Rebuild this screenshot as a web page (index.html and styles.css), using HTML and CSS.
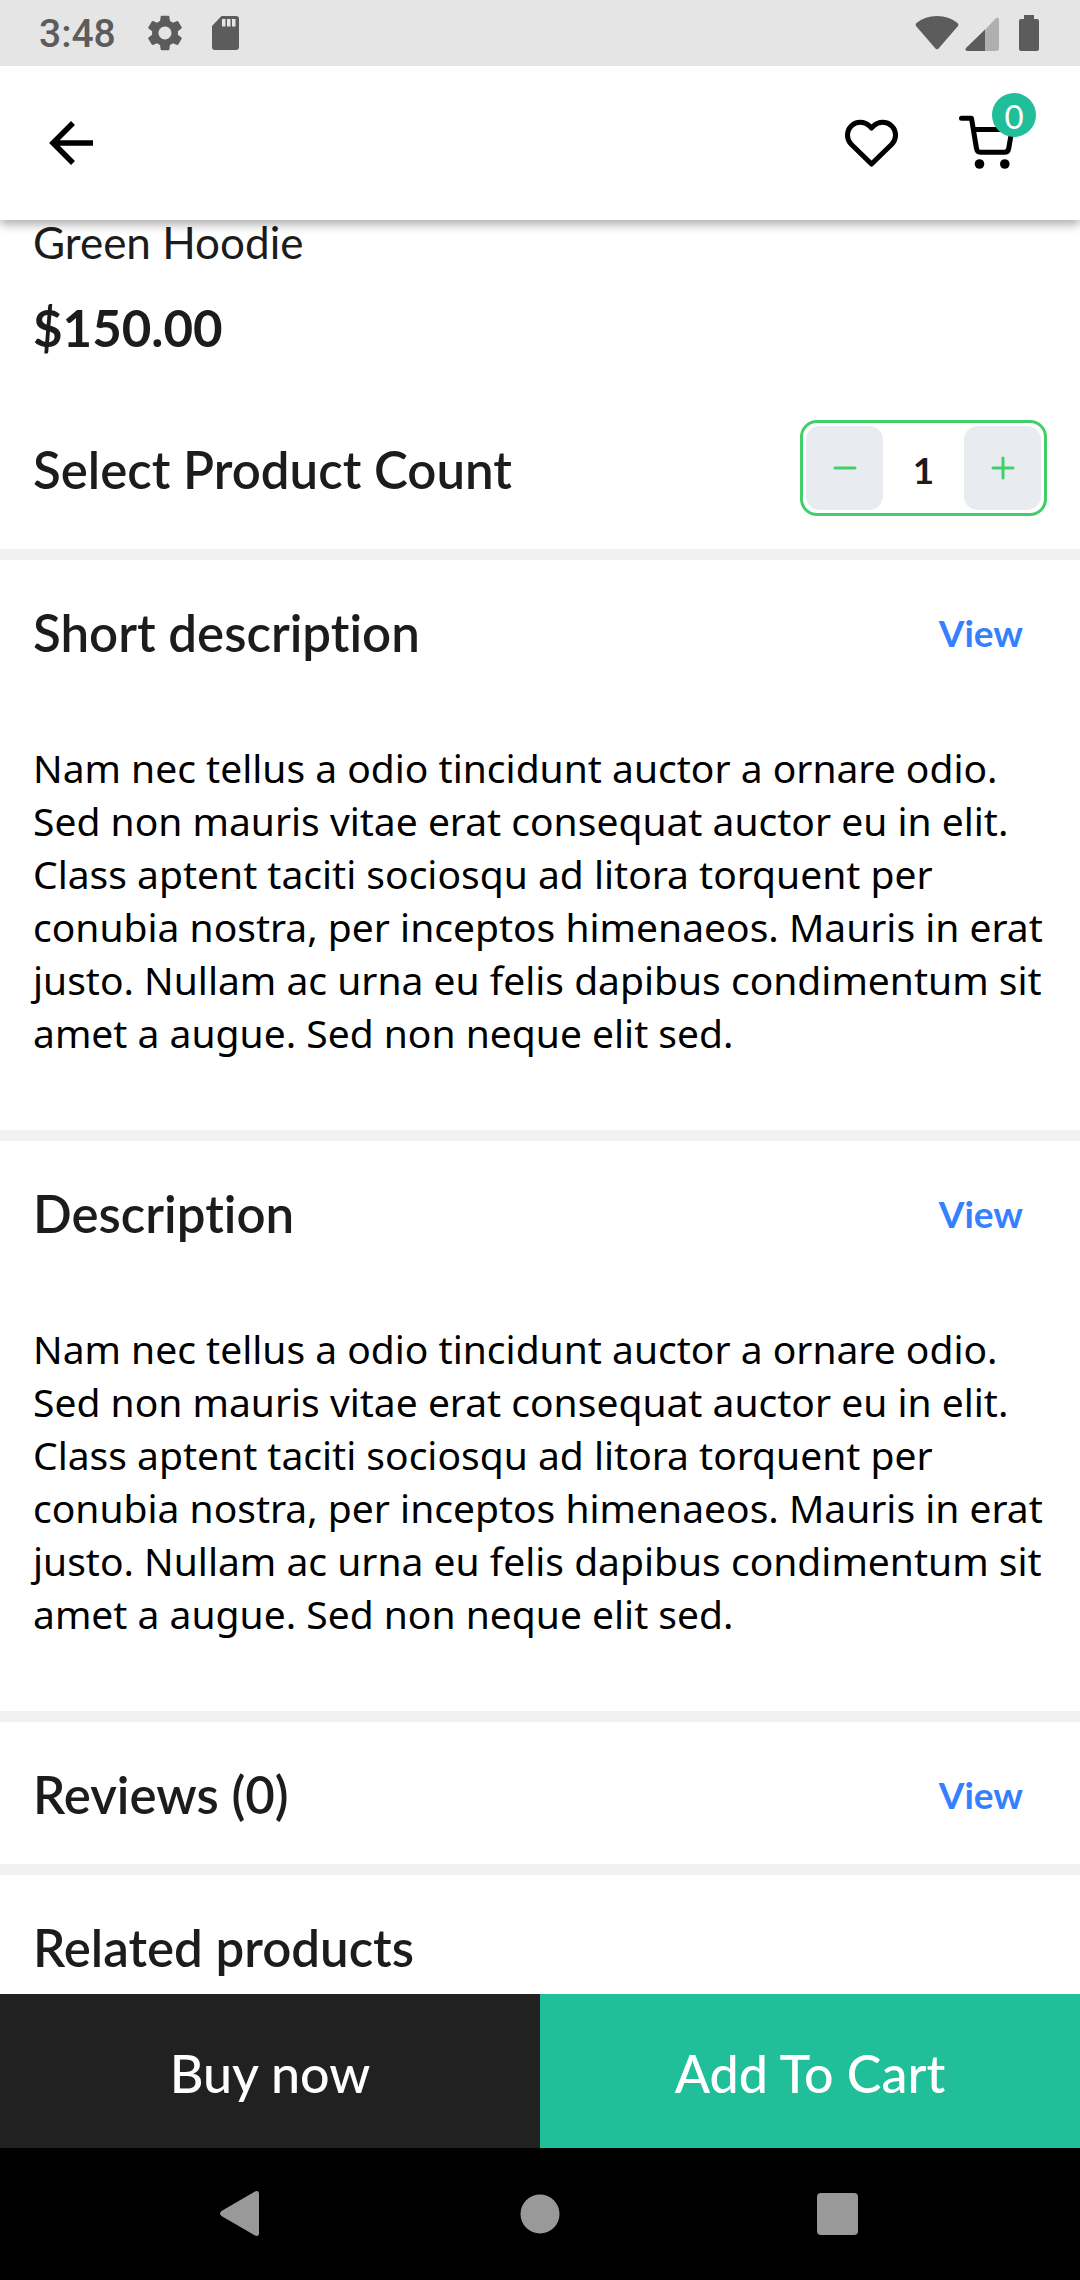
FILE: index.html
```html
<!DOCTYPE html>
<html lang="en">
<head>
<meta charset="utf-8">
<meta name="viewport" content="width=device-width, initial-scale=1">
<title>Green Hoodie</title>
<link rel="stylesheet" href="styles.css">
</head>
<body>
<div class="top">
  <div class="status">
    <span class="time">3:48</span>
    <svg class="gear" width="40" height="40" viewBox="2 2 20 20" aria-hidden="true"><path fill="currentColor" d="M19.14 12.94c.04-.3.06-.61.06-.94 0-.32-.02-.64-.07-.94l2.03-1.58c.18-.14.23-.41.12-.61l-1.92-3.32c-.12-.22-.37-.29-.59-.22l-2.39.96c-.5-.38-1.03-.7-1.62-.94l-.36-2.54c-.04-.24-.24-.41-.48-.41h-3.84c-.24 0-.43.17-.47.41l-.36 2.54c-.59.24-1.13.57-1.62.94l-2.39-.96c-.22-.08-.47 0-.59.22L2.74 8.87c-.12.21-.08.47.12.61l2.03 1.58c-.05.3-.09.63-.09.94s.02.64.07.94l-2.03 1.58c-.18.14-.23.41-.12.61l1.92 3.32c.12.22.37.29.59.22l2.39-.96c.5.38 1.03.7 1.62.94l.36 2.54c.05.24.24.41.48.41h3.84c.24 0 .44-.17.47-.41l.36-2.54c.59-.24 1.13-.56 1.62-.94l2.39.96c.22.08.47 0 .59-.22l1.92-3.32c.12-.22.07-.47-.12-.61l-2.01-1.58zM12 15.6c-1.98 0-3.6-1.62-3.6-3.6s1.62-3.6 3.6-3.6 3.6 1.62 3.6 3.6-1.62 3.6-3.6 3.6z"/></svg>
    <svg width="28" height="36" viewBox="0 0 28 36" aria-hidden="true"><path fill="currentColor" fill-rule="evenodd" d="M10.500 1H25q3 0 3 3V32q0 3-3 3H4q-3 0-3-3V11zM11 4V11.500H14.500V4zM16 4V11.500H19.500V4zM21 4V11.500H24.500V4z"/></svg>
    <span class="spacer"></span>
    <svg width="44" height="36" viewBox="0 0 44 36" aria-hidden="true"><path fill="currentColor" d="M1.500 8Q10 1 22 1T42.500 8Q44 9 43 11L24 33Q22 35.500 20 33L1 11Q0 9 1.500 8z"/></svg>
    <svg class="signal" width="34" height="36" viewBox="0 0 34 36" aria-hidden="true"><path fill="#afafaf" d="M19 16L30 4Q34 .5 34 5V33Q34 36 31 36H19z"/><path fill="currentColor" d="M20 14.500V36H2.500Q-1 35.500 1.500 32.500z"/></svg>
    <svg class="battery" width="20" height="36" viewBox="0 0 20 36" aria-hidden="true"><path fill="currentColor" d="M5 0H15V4H18q2 0 2 2V34q0 2-2 2H2q-2 0-2-2V6q0-2 2-2H5z"/></svg>
  </div>
  <header class="bar">
    <button class="icon" aria-label="Back"><svg width="48" height="48" viewBox="0 0 48 48"><path d="M46 24H7M26 4L6 24L26 44" fill="none" stroke="currentColor" stroke-width="5.500"/></svg></button>
    <span class="spacer"></span>
    <button class="icon" aria-label="Add to favourites"><svg width="66" height="66" viewBox="0 0 66 66"><path d="M33.500 54L13.200 34.200A12.900 12.900 0 0 1 31.500 16L33.500 18L35.500 16A12.900 12.900 0 0 1 53.800 34.200Z" fill="none" stroke="currentColor" stroke-width="5" stroke-linejoin="round"/></svg></button>
    <button class="icon cart" aria-label="Cart"><svg width="66" height="66" viewBox="0 0 66 66"><path d="M8.500 8.300H18.500L23.500 38.500Q24 42.300 27.500 42.300H51.500Q55 42.300 55.700 38.500L59 19.500H20.500" fill="none" stroke="currentColor" stroke-width="5" stroke-linejoin="round" stroke-linecap="round"/><circle cx="26.500" cy="54" r="4.800" fill="currentColor"/><circle cx="51.800" cy="54" r="4.800" fill="currentColor"/></svg><span class="badge">0</span></button>
  </header>
</div>

<main class="content">
  <section class="product">
    <h1 class="name">Green Hoodie</h1>
    <p class="price">$150.00</p>
    <div class="count-row">
      <h2 class="heading">Select Product Count</h2>
      <div class="counter">
        <button class="step" aria-label="Decrease"><svg width="24" height="24" viewBox="0 0 24 24"><path d="M2 12H22" stroke="currentColor" stroke-width="3" stroke-linecap="round"/></svg></button>
        <output class="count">1</output>
        <button class="step" aria-label="Increase"><svg width="24" height="24" viewBox="0 0 24 24"><path d="M2 12H22M12 2V22" stroke="currentColor" stroke-width="3" stroke-linecap="round"/></svg></button>
      </div>
    </div>
  </section>
  <section class="panel">
    <div class="panel-head"><h2 class="heading">Short description</h2><a class="view" href="#short">View</a></div>
    <p class="text" id="short">Nam nec tellus a odio tincidunt auctor a ornare odio. Sed non mauris vitae erat consequat auctor eu in elit. Class aptent taciti sociosqu ad litora torquent per conubia nostra, per inceptos himenaeos. Mauris in erat justo. Nullam ac urna eu felis dapibus condimentum sit amet a augue. Sed non neque elit sed.</p>
  </section>
  <section class="panel">
    <div class="panel-head"><h2 class="heading">Description</h2><a class="view" href="#full">View</a></div>
    <p class="text" id="full">Nam nec tellus a odio tincidunt auctor a ornare odio. Sed non mauris vitae erat consequat auctor eu in elit. Class aptent taciti sociosqu ad litora torquent per conubia nostra, per inceptos himenaeos. Mauris in erat justo. Nullam ac urna eu felis dapibus condimentum sit amet a augue. Sed non neque elit sed.</p>
  </section>
  <section class="panel">
    <div class="panel-head"><h2 class="heading">Reviews (0)</h2><a class="view" href="#reviews">View</a></div>
  </section>
  <section class="panel related">
    <h2 class="heading">Related products</h2>
  </section>
</main>

<div class="bottom">
  <div class="actions">
    <button class="action buy">Buy now</button>
    <button class="action add">Add To Cart</button>
  </div>
  <nav class="system">
    <button class="key" aria-label="System back"><svg width="48" height="48" viewBox="0 0 48 48"><path fill="currentColor" d="M39 1.500Q43 0 43 4V43Q43 47 39 45.500L5.500 26Q2.500 23.500 5.500 21z"/></svg></button>
    <button class="key" aria-label="Home"><svg width="48" height="48" viewBox="0 0 48 48"><circle cx="24" cy="24" r="19.500" fill="currentColor"/></svg></button>
    <button class="key" aria-label="Recent apps"><svg width="48" height="48" viewBox="0 0 48 48"><rect x="1" y="3" width="41" height="42" rx="4" fill="currentColor"/></svg></button>
  </nav>
</div>
</body>
</html>
```
FILE: styles.css
```css
* {
  box-sizing: border-box;
}

body {
  margin: 0;
  min-height: 100vh;
  display: flex;
  flex-direction: column;
  background: #fff;
  color: #1c1c1c;
  font-family: Lato, "Open Sans", sans-serif;
  font-variant-ligatures: none;
}

h1, h2, p {
  margin: 0;
}

button {
  border: 0;
  padding: 0;
  background: none;
  color: inherit;
  font: inherit;
}

svg {
  display: block;
}

.spacer {
  flex: 1;
}

/* Status bar and app bar */
.top {
  position: sticky;
  top: 0;
  z-index: 1;
  box-shadow: 0 4px 10px rgba(0, 0, 0, 0.35);
}

.status {
  display: flex;
  align-items: center;
  height: 66px;
  padding: 0 41px 0 39px;
  background: #e5e5e5;
  color: #5c5c5c;
}

.time {
  padding-top: 2px;
  font: 500 39px/64px Roboto, sans-serif;
}

.gear {
  width: 36px;
  height: 36px;
  margin: 0 28px 0 31px;
}

.signal {
  margin: 0 20px 0 6px;
}

.bar {
  display: flex;
  align-items: center;
  height: 154px;
  padding: 0 61px 0 47px;
  background: #fff;
  color: #000;
}

.cart {
  position: relative;
  margin-left: 49px;
}

.badge {
  position: absolute;
  top: -17px;
  right: -17px;
  width: 44px;
  height: 44px;
  padding-top: 2px;
  border-radius: 50%;
  background: #20bf99;
  color: #fff;
  font-size: 33px;
  line-height: 42px;
  text-align: center;
}

/* Product */
.content {
  flex: 1;
}

.product {
  padding: 1px 33px 33px;
}

.name {
  font-size: 44px;
  font-weight: 400;
  line-height: 42px;
}

.price {
  margin-top: 35px;
  font-size: 51px;
  font-weight: 700;
  line-height: 60px;
}

.heading {
  padding-top: 4px;
  font-size: 51px;
  font-weight: 600;
  line-height: 60px;
}

.count-row {
  display: flex;
  align-items: center;
  justify-content: space-between;
  margin-top: 62px;
}

.counter {
  display: flex;
  align-items: center;
  padding: 3px;
  border: 3px solid #41cf69;
  border-radius: 17px;
}

.step {
  display: grid;
  place-items: center;
  width: 77px;
  height: 84px;
  border-radius: 14px;
  background: #e8ebf0;
  color: #41cf69;
}

.count {
  width: 81px;
  padding-top: 3px;
  font-size: 37px;
  font-weight: 700;
  text-align: center;
}

.panel {
  border-top: 11px solid #f1f1f1;
}

.panel-head {
  display: flex;
  align-items: center;
  justify-content: space-between;
  min-height: 142px;
  padding: 0 57px 0 33px;
}

.view {
  padding-top: 3px;
  color: #3580ff;
  font-size: 37px;
  font-weight: 700;
  text-decoration: none;
}

.text {
  padding: 39px 33px 71px;
  color: #000;
  font: 39px/53px "Noto Sans", sans-serif;
}

.related {
  padding: 39px 33px 16px;
}

/* Purchase buttons and system keys */
.bottom {
  position: sticky;
  bottom: 0;
}

.actions {
  display: grid;
  grid-template-columns: 1fr 1fr;
}

.action {
  height: 154px;
  padding-top: 4px;
  color: #fff;
  font-size: 52px;
  font-weight: 500;
}

.buy {
  background: #212121;
}

.add {
  background: #20bf99;
}

.system {
  display: grid;
  grid-template-columns: repeat(3, 1fr);
  height: 132px;
  padding: 0 90px;
  background: #000;
  color: #999;
}

.key {
  display: grid;
  place-items: center;
}
```
